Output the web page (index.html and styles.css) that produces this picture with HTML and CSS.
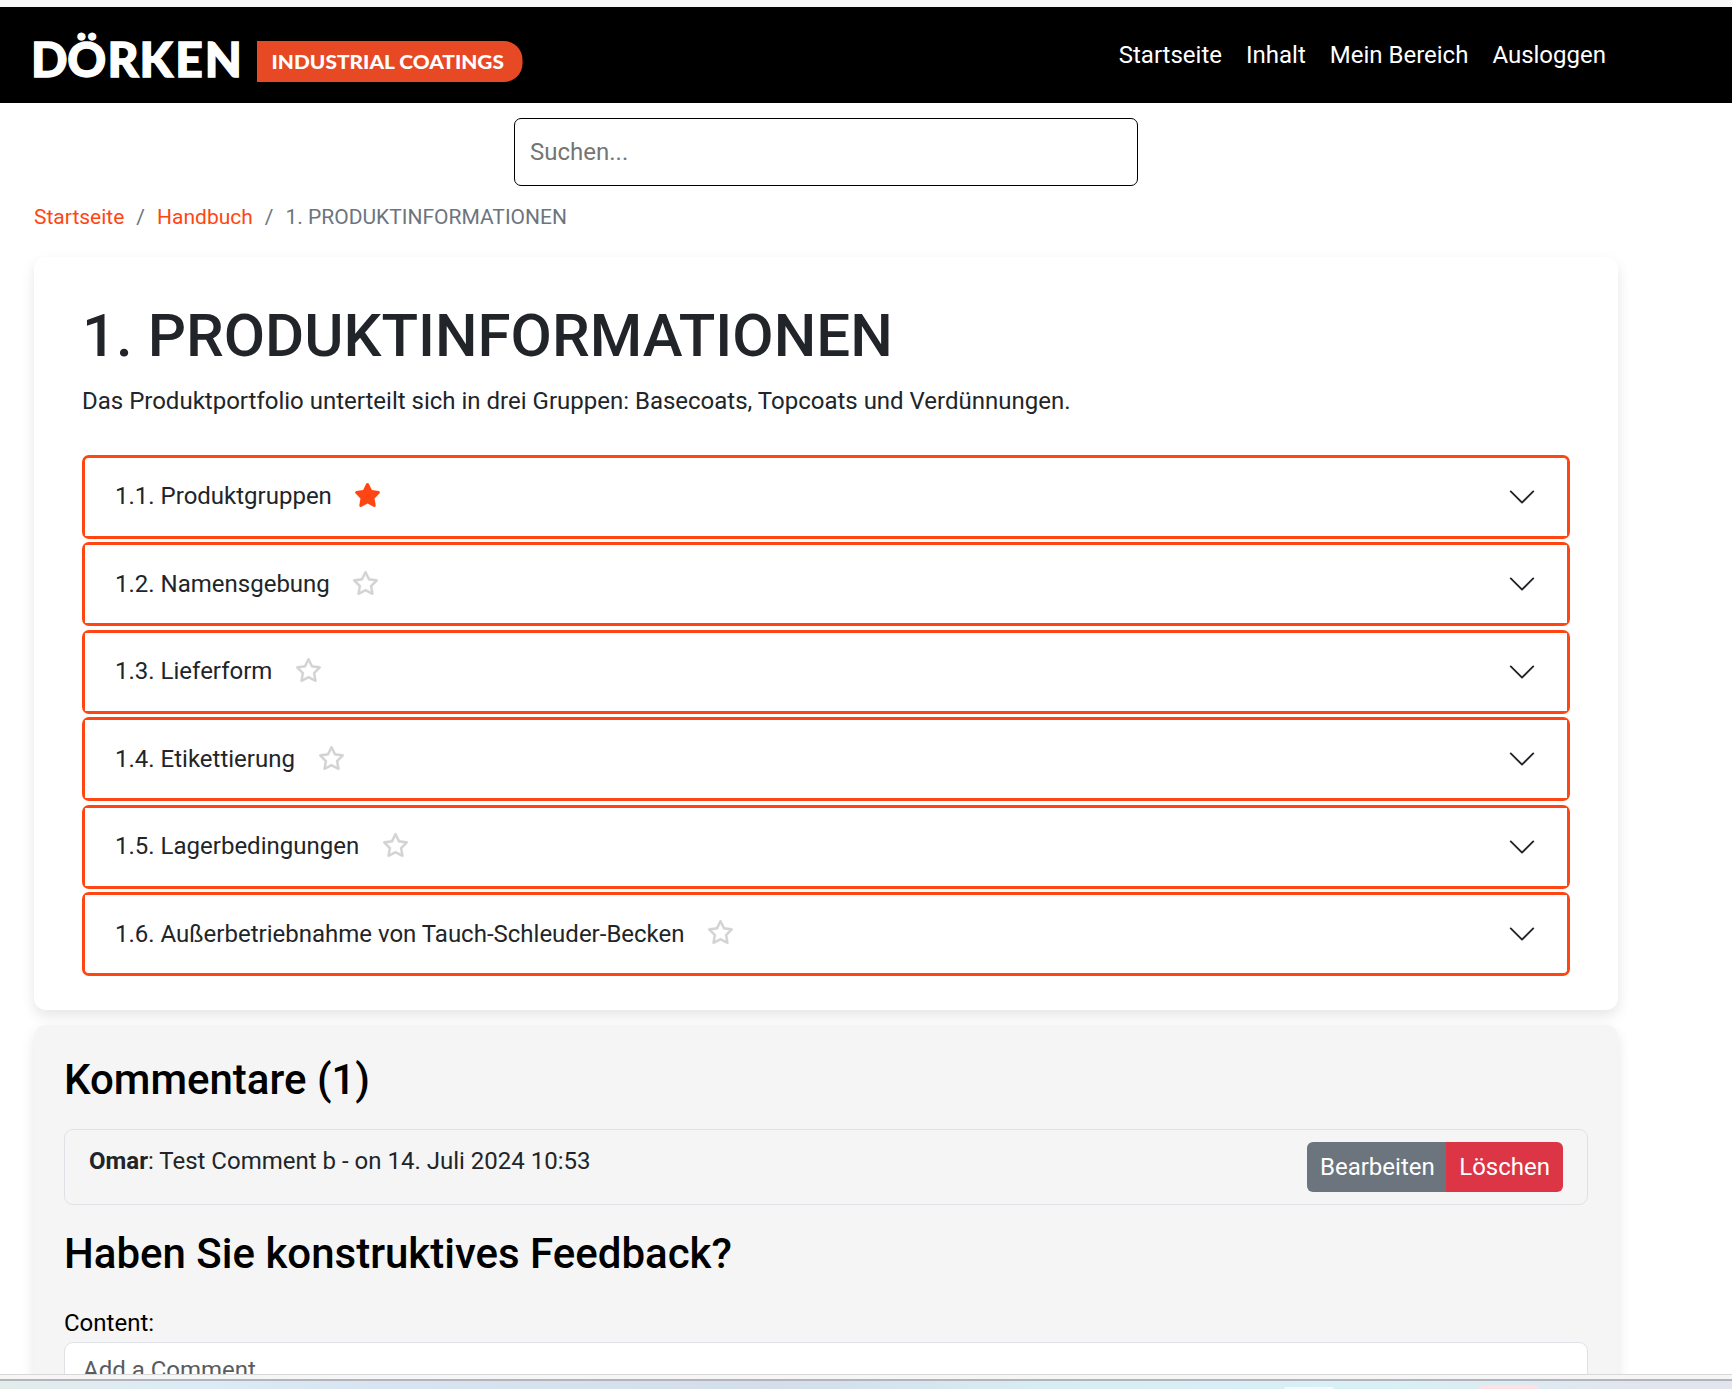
FILE: index.html
```html
<!DOCTYPE html>
<html lang="de">
<head>
<meta charset="utf-8">
<title>1. PRODUKTINFORMATIONEN</title>
<link rel="stylesheet" href="styles.css">
</head>
<body>
<svg class="defs" aria-hidden="true">
  <symbol id="star-solid" viewBox="0 0 576 512"><path d="M316.9 18C311.6 7 300.4 0 288.1 0s-23.4 7-28.8 18L195 150.3 51.4 171.5c-12 1.8-22 10.2-25.7 21.7s-.7 24.2 7.9 32.7L137.8 329 113.2 474.7c-2 12 3 24.2 12.9 31.3s23 8 33.8 2.3l128.3-68.5 128.3 68.5c10.8 5.7 23.9 4.9 33.8-2.3s14.9-19.3 12.9-31.3L438.5 329 542.7 225.9c8.6-8.5 11.7-21.2 7.9-32.7s-13.7-19.9-25.7-21.7L381.2 150.3 316.9 18z"/></symbol>
  <symbol id="star" viewBox="0 0 576 512"><path d="M287.9 0c9.2 0 17.6 5.2 21.6 13.5l68.6 141.3 153.2 22.6c9 1.3 16.5 7.6 19.3 16.3s.5 18.1-5.9 24.5L433.6 328.4l26.2 155.6c1.5 9-2.2 18.1-9.7 23.5s-17.3 6-25.3 1.7l-137-73.2L151 509.1c-8.1 4.3-17.9 3.7-25.3-1.7s-11.2-14.5-9.7-23.5l26.2-155.6L31.1 218.2c-6.5-6.4-8.7-15.9-5.9-24.5s10.3-14.9 19.3-16.3l153.2-22.6L266.3 13.5C270.4 5.2 278.7 0 287.9 0zm0 79L235.4 187.2c-3.5 7.1-10.2 12.1-18.1 13.3L99 217.9 184.9 303c5.5 5.5 8.1 13.3 6.8 21L171.4 443.7l105.2-56.2c7.1-3.8 15.6-3.8 22.6 0l105.2 56.2L384.2 324.1c-1.3-7.7 1.2-15.5 6.8-21l85.9-85.1L358.6 200.5c-7.8-1.2-14.6-6.1-18.1-13.3L287.9 79z"/></symbol>
  <symbol id="chevron" viewBox="0 0 16 16"><path fill-rule="evenodd" d="M1.646 4.646a.5.5 0 0 1 .708 0L8 10.293l5.646-5.647a.5.5 0 0 1 .708.708l-6 6a.5.5 0 0 1-.708 0l-6-6a.5.5 0 0 1 0-.708z"/></symbol>
</svg>
<div class="viewport">
  <header class="navbar">
    <a class="brand">
      <svg width="510" height="72" viewBox="-10 -4 510 72">
        <text class="brand-name" x="-3 33.300 73.500 105.500 141.300 170.700" y="54">DÖRKEN</text>
        <path fill="#e84925" d="M223 18h247a18.500 18.500 0 0 1 18.500 18.500v4A18.500 18.500 0 0 1 470 59H223z"/>
        <text class="brand-tag" x="237.500" y="46" textLength="232.500" lengthAdjust="spacingAndGlyphs">INDUSTRIAL COATINGS</text>
      </svg>
    </a>
    <nav class="nav"><a>Startseite</a><a>Inhalt</a><a>Mein Bereich</a><a>Ausloggen</a></nav>
  </header>
  <main class="container">
    <input class="search" type="text" placeholder="Suchen...">
    <nav class="breadcrumb"><a>Startseite</a><span class="sep">/</span><a>Handbuch</a><span class="sep">/</span><span>1. PRODUKTINFORMATIONEN</span></nav>
    <section class="card chapter">
      <h1>1. PRODUKTINFORMATIONEN</h1>
      <p>Das Produktportfolio unterteilt sich in drei Gruppen: Basecoats, Topcoats und Verdünnungen.</p>
      <div class="accordion">
        <div class="item"><div class="row"><span class="label">1.1. Produktgruppen<svg class="star active"><use href="#star-solid"/></svg></span><svg class="chevron"><use href="#chevron"/></svg></div></div>
        <div class="item"><div class="row"><span class="label">1.2. Namensgebung<svg class="star"><use href="#star"/></svg></span><svg class="chevron"><use href="#chevron"/></svg></div></div>
        <div class="item"><div class="row"><span class="label">1.3. Lieferform<svg class="star"><use href="#star"/></svg></span><svg class="chevron"><use href="#chevron"/></svg></div></div>
        <div class="item"><div class="row"><span class="label">1.4. Etikettierung<svg class="star"><use href="#star"/></svg></span><svg class="chevron"><use href="#chevron"/></svg></div></div>
        <div class="item"><div class="row"><span class="label">1.5. Lagerbedingungen<svg class="star"><use href="#star"/></svg></span><svg class="chevron"><use href="#chevron"/></svg></div></div>
        <div class="item"><div class="row"><span class="label">1.6. Außerbetriebnahme von Tauch-Schleuder-Becken<svg class="star"><use href="#star"/></svg></span><svg class="chevron"><use href="#chevron"/></svg></div></div>
      </div>
    </section>
    <section class="card comments">
      <h2>Kommentare (1)</h2>
      <div class="comment">
        <p><strong>Omar</strong>: Test Comment b - on 14. Juli 2024 10:53</p>
        <div class="btn-group"><button class="btn edit">Bearbeiten</button><button class="btn delete">Löschen</button></div>
      </div>
      <h2>Haben Sie konstruktives Feedback?</h2>
      <label for="content">Content:</label>
      <textarea id="content" placeholder="Add a Comment"></textarea>
    </section>
  </main>
</div>
<footer class="window-edge"></footer>
<div class="taskbar"><span class="tile light"></span><span class="tile pink"></span></div>
</body>
</html>
```
FILE: styles.css
```css
* { box-sizing: border-box; }
html, body { margin: 0; height: 100%; overflow: hidden; }
body {
  display: flex;
  flex-direction: column;
  height: 1389px;
  font: 24px/36px Roboto, "Liberation Sans", sans-serif;
  color: #212529;
  background: #fff;
}
.defs { position: absolute; width: 0; height: 0; }
.viewport { flex: none; height: 1374px; overflow: hidden; border-top: 7px solid #f7f7f7; }
.navbar {
  display: flex;
  justify-content: space-between;
  height: 96px;
  padding: 12px 126px 0 24px;
  background: #000;
}
.brand svg { display: block; }
.brand-name { font: 900 48px Lato, sans-serif; fill: #fff; stroke: #fff; stroke-width: 1.3px; }
.brand-tag { font: 900 19.500px Lato, sans-serif; fill: #fff; }
.nav { display: flex; gap: 24px; padding-top: 18px; color: #fff; }
.container { width: 1584px; margin-left: 34px; padding-top: 15px; }
.search {
  display: block;
  width: 624px;
  height: 68px;
  margin: 0 auto;
  padding: 0 15px;
  border: 1px solid #000;
  border-radius: 7px;
  font: inherit;
  background: #fff;
}
.search::placeholder { color: #757575; }
.breadcrumb { display: flex; gap: 12px; margin-top: 13px; font-size: 21px; color: #6c757d; }
.breadcrumb a { color: #ff4612; }
.card { border-radius: 12px; box-shadow: 0 6px 14px rgba(0, 0, 0, .1); }
.chapter { height: 753px; margin-top: 22px; padding: 43px 48px 0; background: #fff; }
h1 { margin: 0; font-size: 60px; line-height: 72px; font-weight: 500; }
p { margin: 0; }
.chapter p { margin-top: 11px; }
.accordion { display: flex; flex-direction: column; gap: 3.45px; margin-top: 36px; }
.item { height: 84px; border: 3px solid #ff4612; border-radius: 7px; }
.row { display: flex; align-items: center; height: 78px; padding: 0 30px; background: #fff; }
.item:first-child .row { border-radius: 4px 4px 0 0; }
.item:last-child .row { border-radius: 0 0 4px 4px; }
.label { display: flex; padding-bottom: 1.2px; }
.star { width: 27px; height: 24px; margin: 4.900px 0 0 22.600px; fill: #d3d3d3; stroke: #d3d3d3; stroke-width: 6px; }
.star.active { fill: #ff4612; stroke: none; }
.chevron { width: 30px; height: 30px; margin-left: auto; fill: #212529; }
.comments { height: 500px; margin-top: 15px; padding: 30px 30px 0; background: #f5f5f5; color: #000; }
h2 { margin: 0; font-size: 42px; line-height: 50px; font-weight: 500; }
.comment {
  display: flex;
  justify-content: space-between;
  height: 76px;
  margin: 24px 0 24px;
  padding: 12px 24px;
  border: 1px solid #dee2e6;
  border-radius: 9px;
  color: #212529;
}
.comment p { padding-top: 1px; }
.btn-group { display: flex; height: 50px; border-radius: 6px; overflow: hidden; }
.btn { padding: 0 13px; border: 0; font: inherit; color: #fff; }
.edit { padding-right: 11.5px; background: #6c757d; }
.delete { background: #dc3545; }
.comments label { display: block; margin-top: 26px; }
.comments textarea {
  display: block;
  width: 100%;
  height: 150px;
  margin-top: 1px;
  padding: 9px 18px;
  border: 1px solid #dee2e6;
  border-radius: 9px;
  font: inherit;
  resize: none;
}
.comments textarea::placeholder { color: #595c5f; }
.window-edge { flex: none; height: 7px; background: #f6f6f6; border-top: 1px solid #d8d8d8; border-bottom: 2px solid #b1b5bb; }
.taskbar {
  flex: none;
  display: flex;
  align-items: flex-end;
  height: 8px;
  padding-left: 1284px;
  background: linear-gradient(90deg, #e2eceb, #dcebf6 12%, #d8e4f1 22%, #d3deea 45%, #d8ecf3 60%, #d9edf5 68%, #d8f0f5 80%, #e2e5ee 95%);
}
.tile { width: 50px; height: 2px; border-radius: 4px 4px 0 0; }
.light { background: #f1fafc; }
.pink { height: 4px; margin-left: 146px; width: 58px; background: #fce2e5; }
```
